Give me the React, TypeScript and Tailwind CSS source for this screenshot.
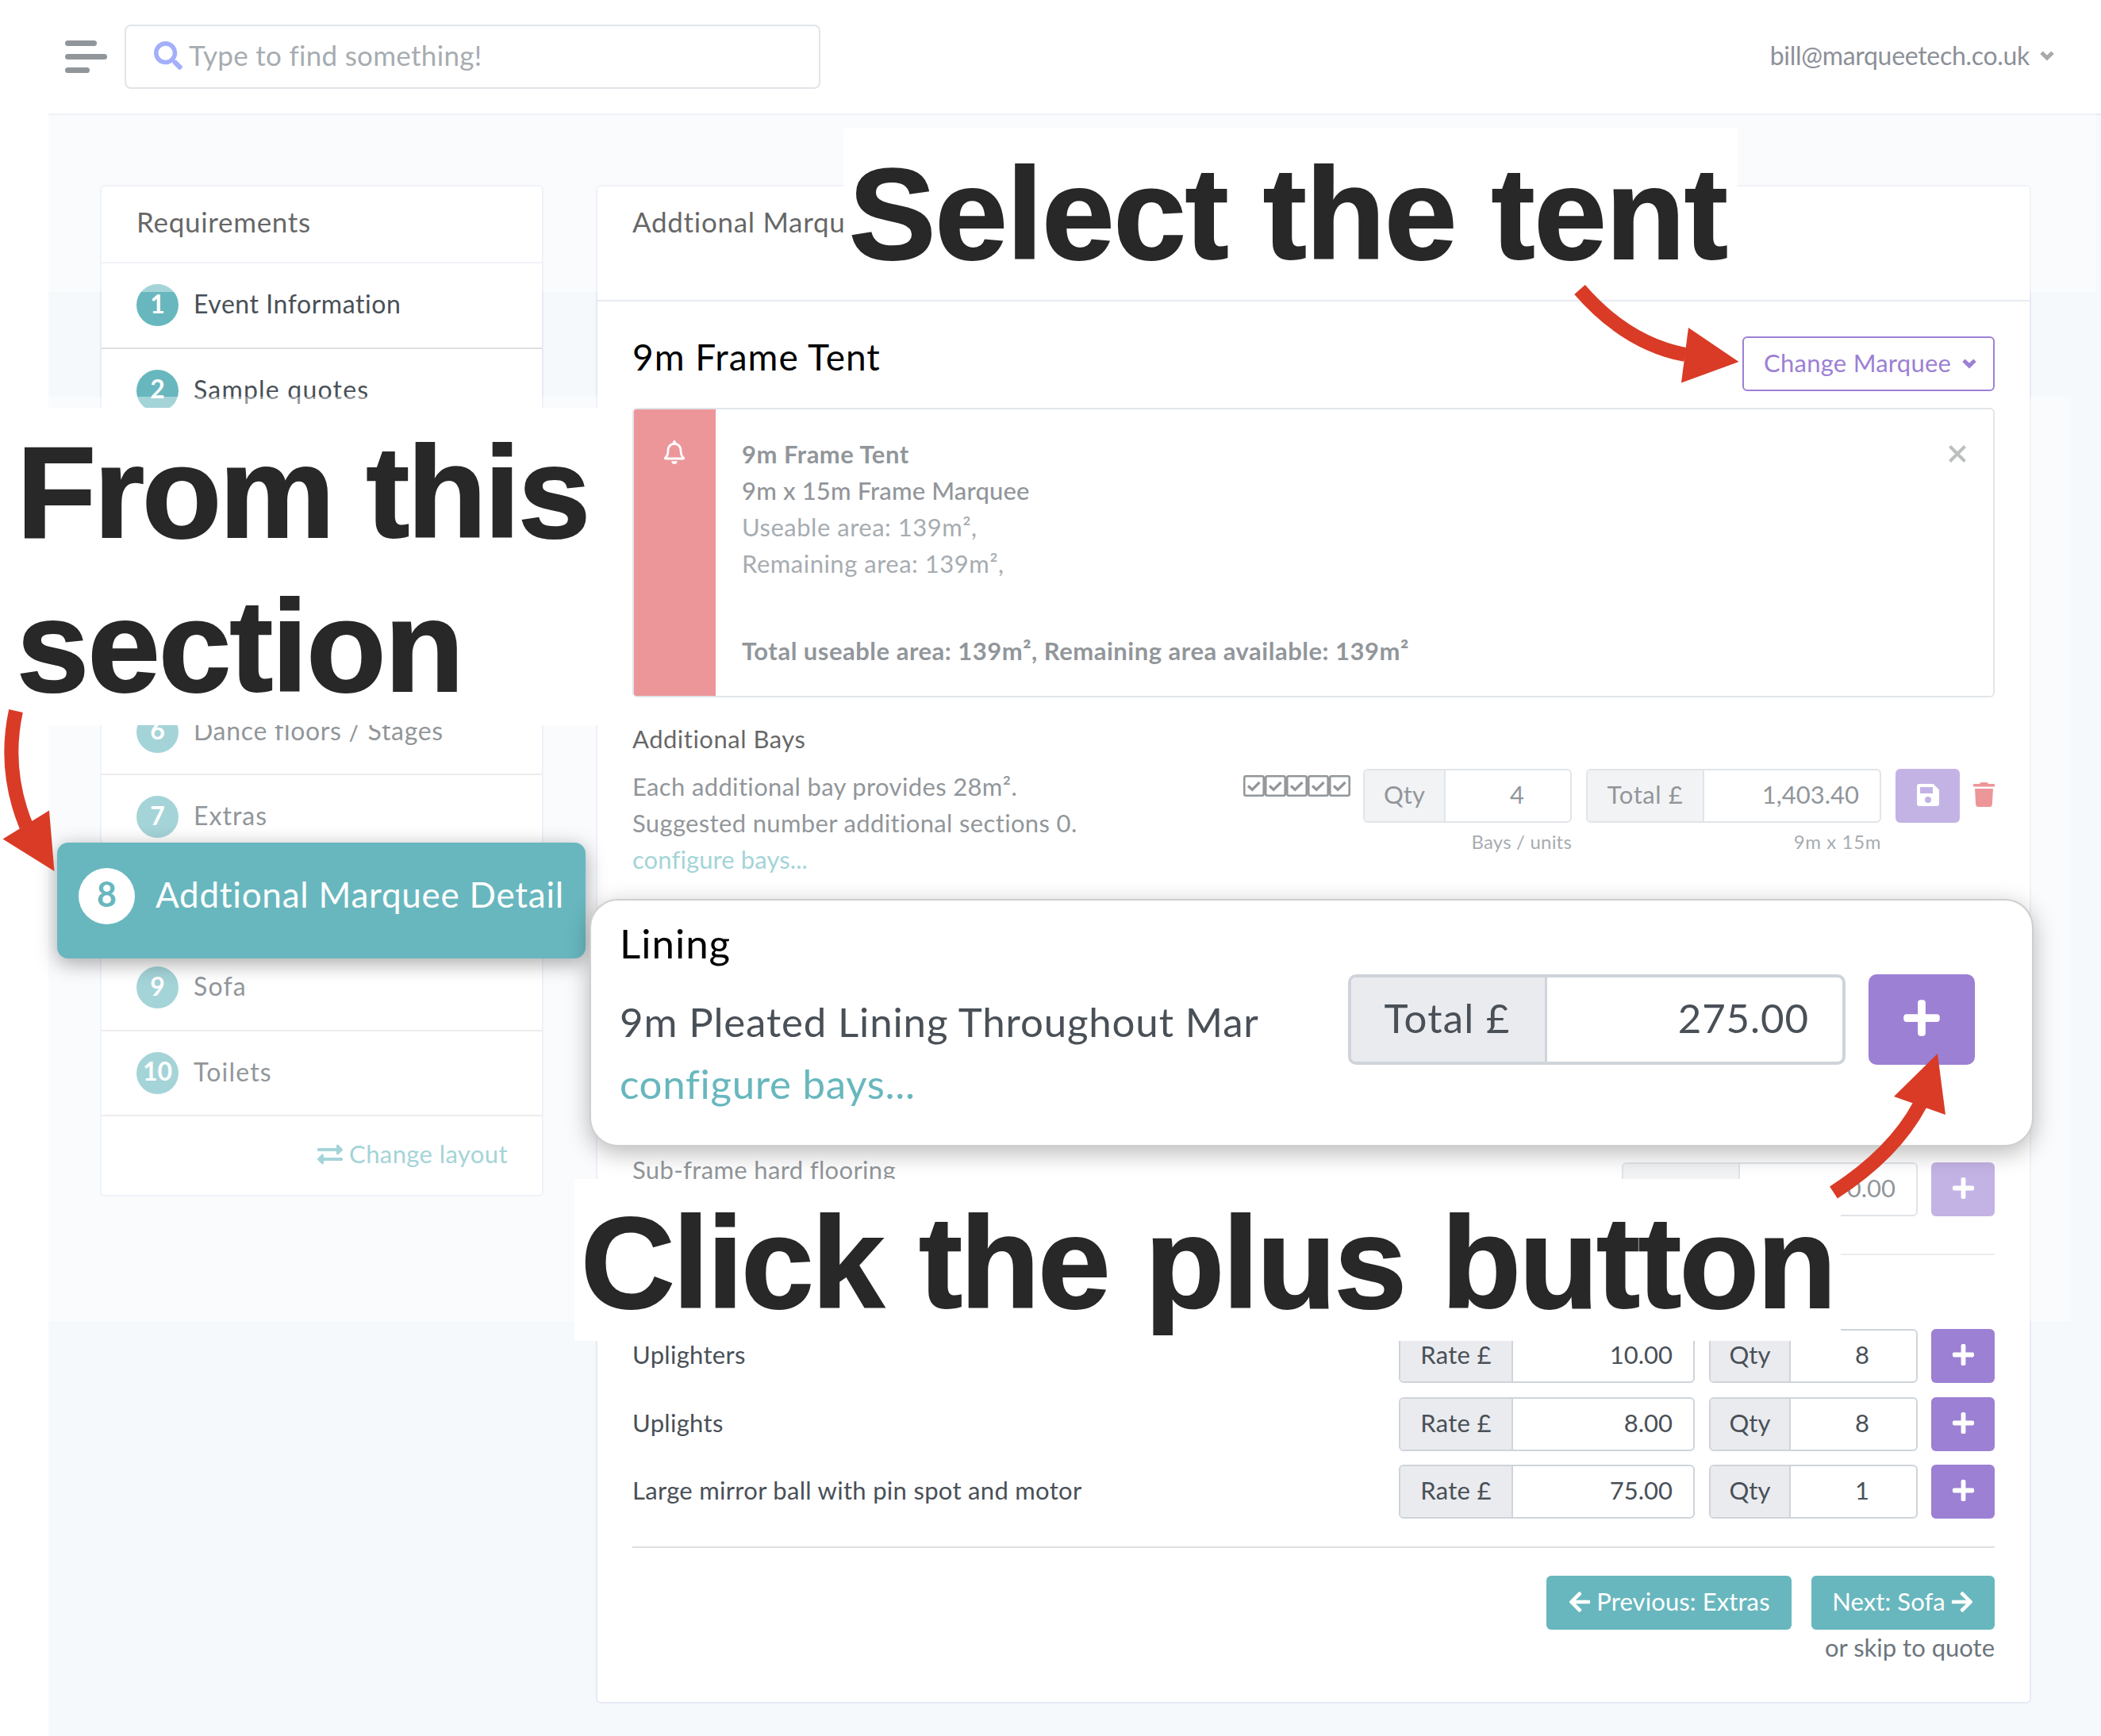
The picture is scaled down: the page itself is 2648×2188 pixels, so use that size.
import React from 'react';
import { FaArrowLeft, FaArrowRight, FaExchangeAlt, FaPlus, FaRegBell, FaSearch } from 'react-icons/fa';

interface Step {
  id: number;
  label: string;
  tracking?: string;
}

interface LightingItem {
  name: string;
  rate: string;
  qty: string;
}

// Steps without a label are covered by a note or by the enlarged step
const steps: Step[] = [
  { id: 1, label: 'Event Information', tracking: 'tracking-[0.55px]' },
  { id: 2, label: 'Sample quotes', tracking: 'tracking-[1.2px]' },
  { id: 3, label: '' },
  { id: 4, label: '' },
  { id: 5, label: '' },
  { id: 6, label: 'Dance floors / Stages', tracking: 'tracking-[0.7px]' },
  { id: 7, label: 'Extras', tracking: 'tracking-[1px]' },
  { id: 8, label: '' },
  { id: 9, label: 'Sofa', tracking: 'tracking-[1.2px]' },
  { id: 10, label: 'Toilets', tracking: 'tracking-[1.2px]' },
];

const lighting: LightingItem[] = [
  { name: 'Uplighters', rate: '10.00', qty: '8' },
  { name: 'Uplights', rate: '8.00', qty: '8' },
  { name: 'Large mirror ball with pin spot and motor', rate: '75.00', qty: '1' },
];

interface InputGroupProps {
  label: string;
  value: string;
  className: string;
  addonClass: string;
  valueClass?: string;
}

function InputGroup({ label, value, className, addonClass, valueClass = 'pr-[26px]' }: InputGroupProps) {
  return (
    <div className={`flex h-[68px] shrink-0 overflow-hidden rounded-md border-2 border-[#ced4da] bg-white leading-[60px] ${className}`}>
      <div className={`shrink-0 border-r-2 border-[#ced4da] bg-[#eaebef] text-center ${addonClass}`}>{label}</div>
      <div className={`flex-1 text-right ${valueClass}`}>{value}</div>
    </div>
  );
}

function PlusButton() {
  return (
    <button className="flex h-[68px] w-20 shrink-0 items-center justify-center rounded-md bg-[#9c80d4] pb-[3px] text-white">
      <FaPlus className="h-[31px] w-[31px]" />
    </button>
  );
}

function Chevron({ className }: { className: string }) {
  return (
    <svg viewBox="0 0 18 13" className={`h-[13px] w-[18px] ${className}`} fill="none" stroke="currentColor">
      <path d="M2 2.200L9 9L16 2.200" strokeWidth="5" />
    </svg>
  );
}

function CheckBoxIcon() {
  return (
    <svg viewBox="0 0 27 27" className="h-[27px] w-[27px]" fill="none" stroke="currentColor">
      <rect x="1.300" y="1.300" width="24.400" height="24.400" rx="2" strokeWidth="2.500" />
      <path d="M6 13.500l5.200 4.800L20.500 9" strokeWidth="3.300" />
    </svg>
  );
}

function SaveIcon() {
  return (
    <svg viewBox="0 0 28 28" className="h-7 w-7" fill="currentColor" fillRule="evenodd">
      <path d="M3 0h16.500c.8 0 1.500.3 2.100.9l5.500 5.500c.6.6.9 1.300.9 2.100V25a3 3 0 0 1-3 3H3a3 3 0 0 1-3-3V3a3 3 0 0 1 3-3zM4 4v8h16V4zM14 16a4 4 0 1 0 0 8 4 4 0 0 0 0-8z" />
    </svg>
  );
}

function TrashIcon() {
  return (
    <svg viewBox="0 0 27 31" className="h-[31px] w-[27px]" fill="currentColor">
      <path d="M1 2h7l1-1.500Q9.300 0 10 0h7q.7 0 1 .5L19 2h7q1 0 1 1v2.500H0V3q0-1 1-1z" />
      <path d="M2 8h23l-1.200 20.300A3 3 0 0 1 21 31H6a3 3 0 0 1-2.800-2.700z" />
    </svg>
  );
}

function Header() {
  return (
    <header className="flex h-[145px] items-start border-b-2 border-[#e7eaf3] bg-white pt-[31px] pl-[21px]">
      <div className="mt-5 flex w-[75px] flex-col gap-[10px]">
        <span className="h-[7px] w-10 rounded-sm bg-[#495057]" />
        <span className="h-[7px] w-[53px] rounded-sm bg-[#495057]" />
        <span className="h-[7px] w-[31px] rounded-sm bg-[#495057]" />
      </div>
      <div className="flex h-[81px] w-[877px] items-center rounded-lg border-2 border-[#ced4da] pl-[35px] text-[#6c757d]">
        <FaSearch className="-mt-1 mr-[8px] h-9 w-9 text-[#667bf8]" />
        <span className="-mt-1 text-[35px] tracking-[0.3px]">Type to find something!</span>
      </div>
      <div className="mt-[19px] mr-[59px] ml-auto flex items-center text-[32px] leading-[40px] tracking-[-0.3px] text-[#3f4654]">
        bill@marqueetech.co.uk
        <Chevron className="ml-[13px] text-[#707070]" />
      </div>
    </header>
  );
}

function StepList() {
  return (
    <aside className="h-[1275px] w-[559px] shrink-0 rounded-md border-2 border-[#e7eaf3] bg-white">
      <h4 className="h-[97px] border-b-2 border-[#e7eaf3] pt-[19px] pl-[44px] text-[35px] leading-[50px] tracking-[0.7px] text-black">
        Requirements
      </h4>
      {steps.map((step) => (
        <div key={step.id} className="flex h-[107.500px] items-center border-b-2 border-[#dfdfdf] pl-[44px] text-[32px]">
          {step.label && (
            <>
              <span className="flex h-[53px] w-[53px] items-center justify-center rounded-full bg-[#68b7be] pb-1 font-bold text-white">
                {step.id}
              </span>
              <span className={`mb-[3px] ml-[19px] ${step.tracking}`}>{step.label}</span>
            </>
          )}
        </div>
      ))}
      <div className="flex h-[96px] items-center justify-end pr-[43px] text-[#68b7be]">
        <FaExchangeAlt className="mr-2 h-8 w-8" />
        <span className="mb-[1px] tracking-[0.4px]">Change layout</span>
      </div>
    </aside>
  );
}

function TentNotice() {
  return (
    <div className="flex h-[365px] overflow-hidden rounded-md border-2 border-[#ced4da] bg-[linear-gradient(90deg,#df5057_103px,#fff_103px)]">
      <div className="-my-[2px] -ml-[2px] flex w-[105px] shrink-0 justify-center bg-[#df5057] pt-[41px]">
        <FaRegBell className="h-[30px] w-[30px] text-white" />
      </div>
      <div className="flex-1 pt-[33px] pl-[33px] leading-[46px] tracking-[0.5px]">
        <p className="font-bold">9m Frame Tent</p>
        <p className="font-medium tracking-[0.15px]">9m x 15m Frame Marquee</p>
        <p className="text-[#6c757d]">Useable area: 139m²,</p>
        <p className="text-[#6c757d]">Remaining area: 139m²,</p>
        <p className="mt-[64px] font-bold">Total useable area: 139m², Remaining area available: 139m²</p>
      </div>
      <svg viewBox="0 0 22 22" className="mt-[45px] mr-[34px] h-[22px] w-[22px]" stroke="#8f9496" strokeWidth="4">
        <path d="M1.500 1.500l19 19M20.500 1.500l-19 19" />
      </svg>
    </div>
  );
}

function MarqueeDetail() {
  return (
    <main className="ml-[66px] h-[1914px] w-[1809px] rounded-md border-2 border-[#e7eaf3] bg-white">
      <h4 className="h-[145px] border-b-2 border-[#e7eaf3] pt-[19px] pl-[44px] text-[35px] leading-[50px] tracking-[0.7px] text-black">
        Addtional Marquee Detail
      </h4>
      <div className="px-[44px]">
        <div className="flex h-[134px] items-start justify-between pt-[44px]">
          <h2 className="pt-px text-[46px] leading-[50px] tracking-[1px] text-black">9m Frame Tent</h2>
          <button className="flex h-[69px] w-[318px] items-center rounded-md border-2 border-[#9c80d4] pl-[25px] tracking-[0.25px] text-[#9c80d4]">
            <span className="mb-[2px]">Change Marquee</span>
            <Chevron className="ml-[14px]" />
          </button>
        </div>

        <TentNotice />

        <h5 className="mt-[29px] leading-[46px] tracking-[0.5px] text-black">Additional Bays</h5>
        <div className="mt-[12px] flex h-[138px] items-start">
          <div className="flex-1 pt-[2px] leading-[46px] tracking-[0.35px]">
            <p>Each additional bay provides 28m².</p>
            <p>Suggested number additional sections 0.</p>
            <p className="tracking-[0.1px] text-[#68b7be]">configure bays...</p>
          </div>
          <div className="mt-[11px] mr-[16px] flex">
            {[0, 1, 2, 3, 4].map((n) => (
              <CheckBoxIcon key={n} />
            ))}
          </div>
          <div className="mt-[3px] mr-[18px] text-right">
            <InputGroup label="Qty" value="4" className="w-[263px]" addonClass="w-[102px]" valueClass="pr-[58px]" />
            <p className="mt-[9px] text-[24px] leading-[30px] tracking-[0.2px] text-[#6c757d]">Bays / units</p>
          </div>
          <div className="mt-[3px] mr-[18px] text-right">
            <InputGroup label="Total £" value="1,403.40" className="w-[372px]" addonClass="w-[147px] tracking-[0.6px]" />
            <p className="mt-[9px] text-[24px] leading-[30px] tracking-[0.6px] text-[#6c757d]">9m x 15m</p>
          </div>
          <button className="mt-[3px] flex h-[68px] w-[81px] items-center justify-center rounded-md bg-[#9c80d4] pb-[3px] text-white">
            <SaveIcon />
          </button>
          <span className="mt-[20px] ml-[17px] text-[#df5057]">
            <TrashIcon />
          </span>
        </div>

        <div className="mt-[346px] flex h-[132px] items-start justify-between border-b-2 border-[#dfdfdf]">
          <p className="pt-px leading-[46px] tracking-[0.35px]">Sub-frame hard flooring</p>
          <div className="mt-[15px] flex gap-[17px]">
            <InputGroup label="Total £" value="0.00" className="w-[373px]" addonClass="w-[147px]" />
            <PlusButton />
          </div>
        </div>

        <div className="mt-[93px] flex h-[276px] flex-col gap-[17.500px] border-b-2 border-[#dfdfdf]">
          {lighting.map((item) => (
            <div key={item.name} className="flex items-center">
              <span className="mb-[3px] flex-1 tracking-[0.3px]">{item.name}</span>
              <InputGroup label="Rate £" value={item.rate} className="w-[373px]" addonClass="w-[142px] tracking-[0.3px]" />
              <InputGroup
                label="Qty"
                value={item.qty}
                className="mr-[17px] ml-[18px] w-[263px]"
                addonClass="w-[101px]"
                valueClass="pr-[59px]"
              />
              <PlusButton />
            </div>
          ))}
        </div>

        <div className="mt-[35px] flex justify-end gap-[25px] tracking-[0.1px] text-white">
          <button className="flex h-[68px] w-[309px] items-center justify-center rounded-md bg-[#68b7be]">
            <FaArrowLeft className="mr-[6px] mb-[3px] h-[30px] w-[30px]" />
            <span className="mb-[3px]">Previous: Extras</span>
          </button>
          <button className="flex h-[68px] w-[231px] items-center justify-center rounded-md bg-[#68b7be]">
            <span className="mb-[3px]">Next: Sofa</span>
            <FaArrowRight className="mb-[3px] ml-[6px] h-[30px] w-[30px]" />
          </button>
        </div>
        <p className="text-right leading-[44px] text-[#6c757d]">or skip to quote</p>
      </div>
    </main>
  );
}

// Enlarged copy of the active step
function StepCallout() {
  return (
    <div className="absolute top-[1062px] left-[72px] flex h-[146px] w-[666px] rounded-[14px] bg-[#68b7be] pt-[32px] pl-[27px] text-white shadow-[0_6px_26px_rgba(0,0,0,0.35)]">
      <span className="flex h-[71px] w-[71px] items-center justify-center rounded-full bg-white pb-1 text-[43px] font-bold text-[#68b7be]">
        8
      </span>
      <span className="ml-[26px] text-[44px] leading-[66px] tracking-[0.75px] whitespace-nowrap">Addtional Marquee Detail</span>
    </div>
  );
}

// Enlarged copy of the lining row
function LiningCallout() {
  return (
    <div className="absolute top-[1133px] left-[743px] flex h-[312px] w-[1820px] rounded-[36px] border-2 border-[#cfcfcf] bg-white pl-[36px] text-[51px] shadow-[0_8px_30px_rgba(0,0,0,0.28)]">
      <div className="w-[804px] pt-[19px] whitespace-nowrap">
        <h3 className="leading-[70px] tracking-[1px] text-black">Lining</h3>
        <p className="mt-[25px] leading-[78px] tracking-[0.85px]">9m Pleated Lining Throughout Mar</p>
        <p className="leading-[78px] tracking-[0.7px] text-[#68b7be]">configure bays...</p>
      </div>
      <div className="mt-[93px] ml-[114px] flex h-[114px] w-[627px] overflow-hidden rounded-[10px] border-4 border-[#ced4da] leading-[102px]">
        <div className="w-[247px] border-r-[3px] border-[#ced4da] bg-[#eaebef] pr-[2px] text-center tracking-[1.2px]">Total £</div>
        <div className="flex-1 pr-[42px] text-right tracking-[0.9px]">275.00</div>
      </div>
      <button className="mt-[93px] ml-[29px] flex h-[114px] w-[134px] items-center justify-center rounded-[10px] bg-[#9c80d4] pb-1 text-white">
        <FaPlus className="h-[52px] w-[52px]" />
      </button>
    </div>
  );
}

function Arrows() {
  return (
    <svg viewBox="0 0 2648 2188" className="absolute inset-0 h-full w-full" fill="#d93b26">
      <g fill="none" stroke="#d93b26" strokeWidth="18">
        <path d="M1991 365Q2050 433 2124 447" />
        <path d="M20 896Q4 970 33 1041" />
        <path d="M2311 1503Q2387 1454 2420 1392" />
      </g>
      <path d="M2191.500 456L2128 413L2119 482.500Z" />
      <path d="M68.500 1098L62 1021.500L3.500 1057.500Z" />
      <path d="M2442 1328L2387 1382L2452 1405Z" />
    </svg>
  );
}

export default function App() {
  return (
    <div className="relative h-[2188px] w-[2648px] overflow-hidden bg-white font-[Lato,sans-serif] text-[31px] text-[#495057]">
      <div className="ml-[61px] h-[2188px] bg-[#f5f9fc]">
        <Header />
        <div className="flex pt-[88px] pl-[65px]">
          <StepList />
          <MarqueeDetail />
        </div>
      </div>

      {/* Faded areas behind the notes */}
      <div className="absolute top-0 left-0 h-[368px] w-[2642px] bg-white/40" />
      <div className="absolute top-[500px] left-0 h-[1165px] w-[2610px] bg-white/40" />

      <StepCallout />
      <LiningCallout />

      {/* Notes */}
      <div className="absolute top-[162px] left-[1063px] h-[206px] w-[1127px] bg-white pt-[10px] pl-[7px] font-['Liberation_Sans',sans-serif] text-[164px] leading-[196px] font-bold tracking-[-0.95px] whitespace-nowrap text-[#282828] [-webkit-text-stroke:2px_#282828]">
        Select the tent
      </div>
      <div className="absolute top-[514px] left-0 h-[400px] w-[775px] bg-white pt-[10px] pl-[21px] font-['Liberation_Sans',sans-serif] text-[164px] leading-[194px] font-bold text-[#282828] [-webkit-text-stroke:2px_#282828]">
        <span className="block tracking-[-3px]">From this</span>
        <span className="block tracking-[-1.7px]">section</span>
      </div>
      <div className="absolute top-[1486px] left-[724px] h-[204px] w-[1596px] bg-white pt-[8px] pl-[8px] font-['Liberation_Sans',sans-serif] text-[164px] leading-[196px] font-bold tracking-[-2.4px] [word-spacing:3px] whitespace-nowrap text-[#282828] [-webkit-text-stroke:2px_#282828]">
        Click the plus button
      </div>
      <Arrows />
    </div>
  );
}
